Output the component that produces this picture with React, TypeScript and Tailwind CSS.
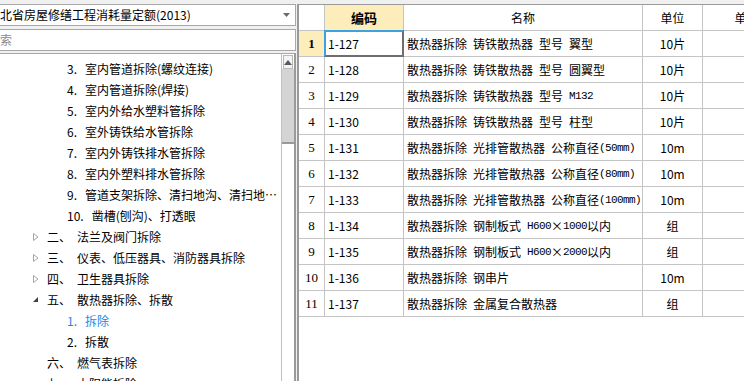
import React from 'react'

const FONT = "font-['Noto_Sans_CJK_SC','Noto_Sans',sans-serif]"

interface QuotaRow {
    no: number
    code: string
    name: string
    unit: string
}

const rows: QuotaRow[] = [
    { no: 1, code: '1-127', name: '散热器拆除 铸铁散热器 型号 翼型', unit: '10片' },
    { no: 2, code: '1-128', name: '散热器拆除 铸铁散热器 型号 圆翼型', unit: '10片' },
    { no: 3, code: '1-129', name: '散热器拆除 铸铁散热器 型号 M132', unit: '10片' },
    { no: 4, code: '1-130', name: '散热器拆除 铸铁散热器 型号 柱型', unit: '10片' },
    { no: 5, code: '1-131', name: '散热器拆除 光排管散热器 公称直径(50mm)', unit: '10m' },
    { no: 6, code: '1-132', name: '散热器拆除 光排管散热器 公称直径(80mm)', unit: '10m' },
    { no: 7, code: '1-133', name: '散热器拆除 光排管散热器 公称直径(100mm)', unit: '10m' },
    { no: 8, code: '1-134', name: '散热器拆除 钢制板式 H600×1000以内', unit: '组' },
    { no: 9, code: '1-135', name: '散热器拆除 钢制板式 H600×2000以内', unit: '组' },
    { no: 10, code: '1-136', name: '散热器拆除 钢串片', unit: '10m' },
    { no: 11, code: '1-137', name: '散热器拆除 金属复合散热器', unit: '组' },
]

// half-width runs get a 6px-per-char mono face, like the SimSun grid text
const HalfWidth = ({ text }: { text: string }) => {
    const parts = text.split(/([\x20-\x7e]+)/).filter(Boolean)
    return (
        <>
            {parts.map((p, i) =>
                /^[\x20-\x7e]+$/.test(p) ? (
                    <span key={i} className="font-['Liberation_Mono',monospace] text-[11px] tracking-[-0.6px] whitespace-pre">
                        {p}
                    </span>
                ) : (
                    <span key={i}>{p}</span>
                )
            )}
        </>
    )
}

type TreeItem =
    | { kind: 'leaf'; num: string; text: string; active?: boolean }
    | { kind: 'group'; num: string; text: string; state: 'closed' | 'open' | 'none' }

const tree: TreeItem[] = [
    { kind: 'leaf', num: '3.', text: '室内管道拆除(螺纹连接)' },
    { kind: 'leaf', num: '4.', text: '室内管道拆除(焊接)' },
    { kind: 'leaf', num: '5.', text: '室内外给水塑料管拆除' },
    { kind: 'leaf', num: '6.', text: '室外铸铁给水管拆除' },
    { kind: 'leaf', num: '7.', text: '室内外铸铁排水管拆除' },
    { kind: 'leaf', num: '8.', text: '室内外塑料排水管拆除' },
    { kind: 'leaf', num: '9.', text: '管道支架拆除、清扫地沟、清扫地沟内管道' },
    { kind: 'leaf', num: '10.', text: '凿槽(刨沟)、打透眼' },
    { kind: 'group', num: '二、', text: '法兰及阀门拆除', state: 'closed' },
    { kind: 'group', num: '三、', text: '仪表、低压器具、消防器具拆除', state: 'closed' },
    { kind: 'group', num: '四、', text: '卫生器具拆除', state: 'closed' },
    { kind: 'group', num: '五、', text: '散热器拆除、拆散', state: 'open' },
    { kind: 'leaf', num: '1.', text: '拆除', active: true },
    { kind: 'leaf', num: '2.', text: '拆散' },
    { kind: 'group', num: '六、', text: '燃气表拆除', state: 'none' },
    { kind: 'group', num: '七、', text: '太阳能拆除', state: 'none' },
]

const Caret = ({ state }: { state: 'closed' | 'open' | 'none' }) => {
    if (state === 'none') return <span className="w-[14px] shrink-0" />
    if (state === 'closed') {
        return (
            <svg width="14" height="10" viewBox="0 0 14 10" className="shrink-0">
                <path d="M2.5 1.5 L7 5 L2.5 8.5 Z" fill="white" stroke="#a6a6a6" strokeWidth="1" />
            </svg>
        )
    }
    return (
        <svg width="14" height="10" viewBox="0 0 14 10" className="shrink-0">
            <path d="M7 2 L7 7 L2 7 Z" fill="#404040" />
        </svg>
    )
}

const TreeRow = ({ item }: { item: TreeItem }) => {
    if (item.kind === 'leaf') {
        return (
            <div className={`h-[21px] flex items-center pl-[67px] whitespace-nowrap ${item.active ? 'text-[#1a86e8]' : 'text-black'}`}>
                <span className="shrink-0">{item.num}</span>
                <span className="ml-[8px] min-w-0 overflow-hidden text-ellipsis">{item.text}</span>
            </div>
        )
    }
    return (
        <div className="h-[21px] flex items-center pl-[31px] whitespace-nowrap text-black">
            <Caret state={item.state} />
            <span className="ml-[2px] shrink-0">{item.num}</span>
            <span className="ml-[6px] min-w-0 overflow-hidden text-ellipsis">{item.text}</span>
        </div>
    )
}

const App: React.FC = () => {
    return (
        <div className={`w-[744px] h-[381px] overflow-hidden bg-[#f0f0f0] flex text-[12px] leading-[16px] ${FONT}`}>
            {/* Left side: quota selector + chapter tree */}
            <div className="w-[296px] shrink-0 flex flex-col pt-[4px]">
                <div className="h-[22px] bg-white border border-l-0 border-[#a8a8a8] flex items-center justify-between pr-[5px]">
                    <span className="text-black whitespace-nowrap">北省房屋修缮工程消耗量定额(2013)</span>
                    <svg width="7" height="4" viewBox="0 0 7 4">
                        <path d="M0 0 L7 0 L3.5 4 Z" fill="#6a6a6a" />
                    </svg>
                </div>
                <div className="h-[22px] mt-[3px] bg-white border border-l-0 border-[#a8a8a8] flex items-center">
                    <span className="text-[#8a8a8a]">索</span>
                </div>
                <div className="flex-1 mt-[2px] bg-white border-t border-[#a8a8a8] border-r-2 border-r-[#9a9a9a] flex min-h-0">
                    <div className="flex-1 min-w-0 pt-[4px] pr-[2px] overflow-hidden">
                        {tree.map((item, i) => (
                            <TreeRow key={i} item={item} />
                        ))}
                    </div>
                    {/* scrollbar */}
                    <div className="w-[13px] shrink-0 border-l border-[#c0c0c0] flex flex-col pt-[1px] bg-white">
                        <div className="h-[14px] mx-[1px] border border-[#b8b8b8] bg-[#f4f4f4] flex items-center justify-center">
                            <svg width="8" height="5" viewBox="0 0 8 5">
                                <path d="M0 5 L4 0 L8 5 Z" fill="#505a64" />
                            </svg>
                        </div>
                        <div className="h-[75px] bg-[#d4d4d4] border-b-2 border-[#9a9a9a]" />
                    </div>
                </div>
            </div>

            {/* Right side: quota grid */}
            <div className="flex-1 min-w-0 ml-[1px] mt-[4px] bg-white border-l-2 border-t border-[#9a9a9a] overflow-hidden">
                <div className="flex h-[26px] whitespace-nowrap">
                    <div className="w-[26px] shrink-0 border-r border-b border-[#c4c4c4]" />
                    <div className="w-[79px] shrink-0 border-r border-b border-[#c4c4c4] bg-[#fdedbb] flex items-center justify-center font-bold text-[13px] text-black">
                        编码
                    </div>
                    <div className="w-[239px] shrink-0 border-r border-b border-[#c4c4c4] flex items-center justify-center text-black">
                        名称
                    </div>
                    <div className="w-[60px] shrink-0 border-r border-b border-[#c4c4c4] flex items-center justify-center text-black">
                        单位
                    </div>
                    <div className="w-[88px] shrink-0 border-r border-b border-[#c4c4c4] flex items-center justify-center text-black">
                        单价
                    </div>
                </div>
                {rows.map(row => {
                    const selected = row.no === 1
                    return (
                        <div key={row.no} className="flex h-[26px] whitespace-nowrap text-black">
                            <div
                                className={`w-[26px] shrink-0 border-r border-b border-[#c4c4c4] flex items-center justify-center font-['Liberation_Serif',serif] text-[13px] ${
                                    selected ? 'bg-[#fdedbb] font-bold' : ''
                                }`}
                            >
                                {row.no}
                            </div>
                            <div className="relative w-[79px] shrink-0 border-r border-b border-[#c4c4c4] flex items-center pl-[3px]">
                                {row.code}
                                {selected && (
                                    <div className="absolute -left-px -top-px right-[-1px] bottom-[-1px] border-t-2 border-l-2 border-t-[#3ba3df] border-l-[#3ba3df] border-r-2 border-b-2 border-r-[#6e6e6e] border-b-[#6e6e6e]" />
                                )}
                            </div>
                            <div className="w-[239px] shrink-0 border-r border-b border-[#c4c4c4] flex items-center pl-[3px] overflow-hidden">
                                <HalfWidth text={row.name} />
                            </div>
                            <div className="w-[60px] shrink-0 border-r border-b border-[#c4c4c4] flex items-center justify-center">
                                {row.unit}
                            </div>
                            <div className="w-[88px] shrink-0 border-r border-b border-[#c4c4c4]" />
                        </div>
                    )
                })}
            </div>
        </div>
    )
}

export default App
